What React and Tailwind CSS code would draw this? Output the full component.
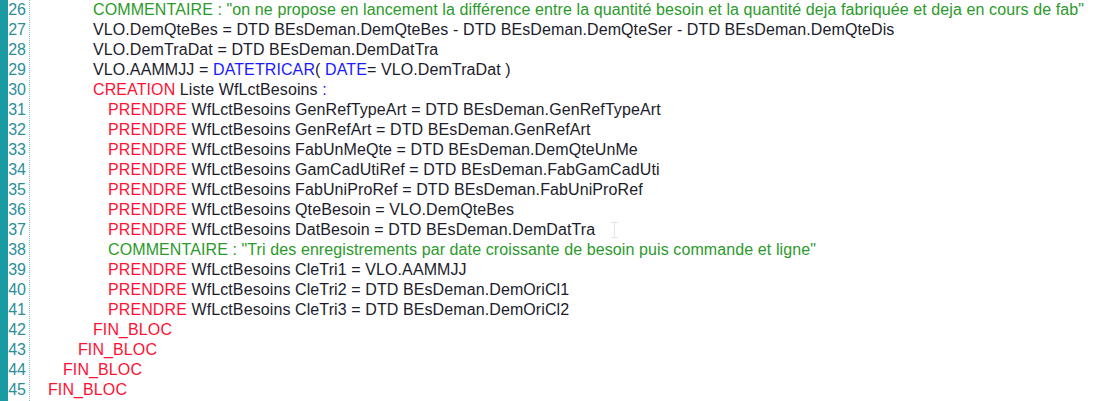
import React from "react";

const G = "text-[#2b9a2b]";
const R = "text-[#ff1133]";
const B = "text-[#1a1aff]";
const K = "text-[#1c1c2c]";

const lines = [
  [26, 3, [[G, 'COMMENTAIRE : "on ne propose en lancement la différence entre la quantité besoin et la quantité deja fabriquée et deja en cours de fab"']]],
  [27, 3, [[K, "VLO.DemQteBes = DTD BEsDeman.DemQteBes - DTD BEsDeman.DemQteSer - DTD BEsDeman.DemQteDis"]]],
  [28, 3, [[K, "VLO.DemTraDat = DTD BEsDeman.DemDatTra"]]],
  [29, 3, [[K, "VLO.AAMMJJ = "], [B, "DATETRICAR"], [K, "( "], [B, "DATE"], [K, "= VLO.DemTraDat )"]]],
  [30, 3, [[R, "CREATION"], [K, " Liste WfLctBesoins "], [B, ":"]]],
  [31, 4, [[R, "PRENDRE"], [K, " WfLctBesoins GenRefTypeArt = DTD BEsDeman.GenRefTypeArt"]]],
  [32, 4, [[R, "PRENDRE"], [K, " WfLctBesoins GenRefArt = DTD BEsDeman.GenRefArt"]]],
  [33, 4, [[R, "PRENDRE"], [K, " WfLctBesoins FabUnMeQte = DTD BEsDeman.DemQteUnMe"]]],
  [34, 4, [[R, "PRENDRE"], [K, " WfLctBesoins GamCadUtiRef = DTD BEsDeman.FabGamCadUti"]]],
  [35, 4, [[R, "PRENDRE"], [K, " WfLctBesoins FabUniProRef = DTD BEsDeman.FabUniProRef"]]],
  [36, 4, [[R, "PRENDRE"], [K, " WfLctBesoins QteBesoin = VLO.DemQteBes"]]],
  [37, 4, [[R, "PRENDRE"], [K, " WfLctBesoins DatBesoin = DTD BEsDeman.DemDatTra"]]],
  [38, 4, [[G, 'COMMENTAIRE : "Tri des enregistrements par date croissante de besoin puis commande et ligne"']]],
  [39, 4, [[R, "PRENDRE"], [K, " WfLctBesoins CleTri1 = VLO.AAMMJJ"]]],
  [40, 4, [[R, "PRENDRE"], [K, " WfLctBesoins CleTri2 = DTD BEsDeman.DemOriCl1"]]],
  [41, 4, [[R, "PRENDRE"], [K, " WfLctBesoins CleTri3 = DTD BEsDeman.DemOriCl2"]]],
  [42, 3, [[R, "FIN_BLOC"]]],
  [43, 2, [[R, "FIN_BLOC"]]],
  [44, 1, [[R, "FIN_BLOC"]]],
  [45, 0, [[R, "FIN_BLOC"]]],
];

const pads = ["pl-[15px]", "pl-[30px]", "pl-[45px]", "pl-[60px]", "pl-[75px]"];

export default function App() {
  return (
    <div
      className="relative flex w-[1096px] h-[401px] overflow-hidden bg-white text-[16px] leading-[20px]"
      style={{ fontFamily: '"Liberation Sans", Arial, sans-serif' }}
    >
      <div className="w-[8px] bg-[#1a9ba3] shrink-0" />
      <div className="w-[22px] shrink-0 border-r border-dotted border-[#7cc4c8] text-right pr-[3px] text-[#2a8f98]">
        {lines.map(([n]) => (
          <div key={n} className="h-[20px]">{n}</div>
        ))}
      </div>
      <div className="flex-1 pl-[3px] tracking-[0.1px]">
        {lines.map(([n, lvl, segs]) => (
          <div key={n} className={`h-[20px] whitespace-pre ${pads[lvl]}`}>
            {segs.map(([c, t], i) => (
              <span key={i} className={c}>{t}</span>
            ))}
          </div>
        ))}
      </div>
      <div className="absolute left-[614px] top-[222px] w-[1px] h-[15px] bg-[#e4e4e4]" />
      <div className="absolute left-[611px] top-[222px] w-[7px] h-[1px] bg-[#e4e4e4]" />
      <div className="absolute left-[611px] top-[237px] w-[7px] h-[1px] bg-[#e4e4e4]" />
    </div>
  );
}
